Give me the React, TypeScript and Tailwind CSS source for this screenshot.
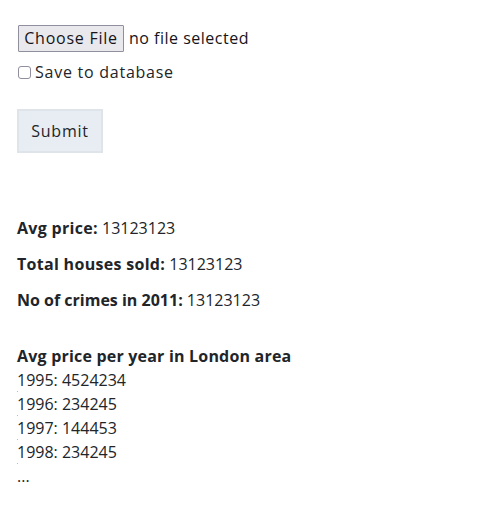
import React from "react";

export default function App() {
  const years = [
    ["1995", "4524234"],
    ["1996", "234245"],
    ["1997", "144453"],
    ["1998", "234245"],
  ];
  const w = "tracking-[0.75px]";
  return (
    <div className="bg-white text-[#212529] text-[16px] leading-[24px] px-[17px] pt-[24px] pb-[20px]" style={{ fontFamily: '"Open Sans", sans-serif' }}>
      <div className="flex items-center h-[28px]">
        <div className={`ml-[1px] h-[27px] w-[106px] flex items-center justify-center border border-[#8f8f9d] bg-[#e9e9ed] text-[#15141a] rounded-[1px] ${w}`}>
          Choose File
        </div>
        <span className={`ml-[5px] text-[#15141a] tracking-[0.5px]`}>no file selected</span>
      </div>
      <div className="flex items-center mt-[8px] h-[24px]">
        <div className="ml-[1px] w-[13px] h-[13px] border border-[#8f8f9d] rounded-[3px] bg-white" />
        <span className={`ml-[4px] ${w}`}>Save to database</span>
      </div>
      <div className="mt-[25px]">
        <div className={`w-[86px] h-[44px] flex items-center justify-center bg-[#e8edf4] border-2 border-[#dfe4ea] text-[#212529] ${w}`}>
          Submit
        </div>
      </div>
      <div className="mt-[63px] flex flex-col gap-[12px]">
        <p><b className="tracking-[0.3px]">Avg price:</b> 13123123</p>
        <p><b className="tracking-[0.3px]">Total houses sold:</b> 13123123</p>
        <p><b>No of crimes in 2011:</b> 13123123</p>
      </div>
      <div className="mt-[32px]">
        <p className="font-bold tracking-[0.2px]">Avg price per year in London area</p>
        {years.map(([y, v]) => (
          <div key={y} className="relative">
            <span>{y}: {v}</span>
            <span className="absolute left-0 top-[23px] w-[1px] h-[1px] bg-[#bbbbbb]" />
          </div>
        ))}
        <div>...</div>
      </div>
    </div>
  );
}
